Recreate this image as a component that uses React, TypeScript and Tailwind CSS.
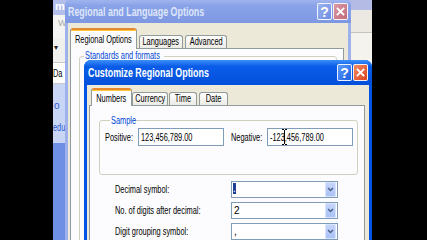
import React from "react"

// the capture is squeezed sideways, so text is drawn in Arial metrics and narrowed
function T({ children, center, className = "" }: { children: React.ReactNode; center?: boolean; className?: string }) {
  return (
    <span className={`inline-block whitespace-nowrap scale-x-[0.74] ${center ? "origin-center" : "origin-left"} ${className}`}>
      {children}
    </span>
  )
}

function TitleButton({ kind, active }: { kind: "help" | "close"; active: boolean }) {
  const bg =
    kind === "help"
      ? active
        ? "bg-linear-to-br from-[#5c9bff] to-[#1c5fe0]"
        : "bg-linear-to-br from-[#9ab2f0] to-[#6f8de2]"
      : active
        ? "bg-linear-to-br from-[#f08a62] to-[#d8421c]"
        : "bg-linear-to-br from-[#d99aa4] to-[#c06a78]"
  return (
    <div className={`w-[15px] h-[17px] rounded-[2px] border border-white/90 flex items-center justify-center ${bg}`}>
      {kind === "help" ? (
        <span className="text-white font-bold text-[14px] leading-none">?</span>
      ) : (
        <svg width="9" height="9" viewBox="0 0 9 9">
          <path d="M1.5 1.5l6 6M7.5 1.5l-6 6" stroke="white" strokeWidth="1.8" strokeLinecap="square" />
        </svg>
      )}
    </div>
  )
}

function Tab({ label, selected, w }: { label: string; selected?: boolean; w: string }) {
  return selected ? (
    <div className={`${w} relative z-10 -mb-px flex flex-col bg-[#fcfcfe] border-x border-[#919b9c] rounded-t-[3px] overflow-hidden`}>
      <div className="h-[3px] bg-[#e68b2c] border-b border-[#ffc73c]" />
      <div className="flex-1 flex items-center justify-center text-[10px] leading-none text-black">
        <T center>{label}</T>
      </div>
    </div>
  ) : (
    <div className={`${w} h-[13px] flex items-center justify-center border-x border-t border-[#919b9c] rounded-t-[3px] bg-linear-to-b from-[#fefefe] to-[#ecebe5] text-[10px] leading-none text-black`}>
      <T center>{label}</T>
    </div>
  )
}

function Combo({ value, highlight }: { value: string; highlight?: boolean }) {
  return (
    <div className="w-[107px] h-[17px] border border-[#7f9db9] bg-white flex items-center">
      <div className="flex-1 pl-[1px] text-[10px] leading-none text-black">
        {highlight ? <span className="inline-block bg-[#1f3f94] text-white w-[3px] h-[11px] leading-[11px] overflow-hidden">{value}</span> : <span className="pl-[1px]">{value}</span>}
      </div>
      <div className="w-[11px] h-[15px] mr-px bg-linear-to-b from-[#c6d6fb] to-[#a9c2f6] border border-[#d7e2fb] rounded-[1px] flex items-center justify-center">
        <svg width="7" height="5" viewBox="0 0 7 5">
          <path d="M1 1l2.5 2.5L6 1" stroke="#4d6185" strokeWidth="1.5" fill="none" />
        </svg>
      </div>
    </div>
  )
}

function Field({ value, cursor }: { value: string; cursor?: boolean }) {
  return (
    <div className="relative w-[86px] h-[18px] border border-[#7f9db9] bg-white flex items-center pl-[2px] text-[10px] text-black">
      <T>{value}</T>
      {cursor && (
        <svg className="absolute left-[14px] top-[0px]" width="5" height="16" viewBox="0 0 5 16">
          <path d="M0 0.5h2M3 0.5h2M2.5 1v14M0 15.5h2M3 15.5h2" stroke="#000" strokeWidth="1" fill="none" />
        </svg>
      )}
    </div>
  )
}

export default function App() {
  return (
    <div className="w-[427px] h-[240px] bg-black flex overflow-hidden font-['Liberation_Sans',Arial,sans-serif]">
      <div className="w-[53px] shrink-0" />
      <div className="relative w-[319px] h-[240px] overflow-hidden bg-[#6e8fe4]">
        {/* window far left, mostly hidden */}
        <div className="absolute left-0 top-0 w-[14px] h-[240px] flex flex-col overflow-hidden whitespace-nowrap">
          <div className="h-[15px] bg-[#b3bfeb] pl-[2px] text-white font-bold text-[11px] leading-[12px]">m</div>
          <div className="h-[23px] bg-[#f4f4f2] pl-[5px] pt-[4px] text-[#a8a8a8] text-[9px] leading-none">W</div>
          <div className="h-[24px] bg-[#f0f0ee] pl-[1px] pt-[6px] text-[#202020] text-[8px] leading-none">▾</div>
          <div className="h-[22px] bg-white border-y border-[#c8c8c8] flex items-center text-[10px] text-black">
            <T>Da</T>
          </div>
          <div className="h-[59px] bg-[#c9d5f5] flex flex-col text-[#2a5ad0] text-[10px] leading-none">
            <span className="mt-[17px] pl-[1px]">o</span>
            <span className="mt-[12px]">
              <T>edu</T>
            </span>
          </div>
          <div className="flex-1 bg-[#6e8fe4]" />
        </div>

        {/* window at right edge, behind */}
        <div className="absolute left-[296px] top-[-14px] w-[60px] h-[270px] flex flex-col">
          <div className="h-[24px] bg-[#b4bce6]" />
          <div className="h-[23px] bg-[#ebe9e2] border-b border-[#c8c6bc]" />
          <div className="flex-1 bg-[#f4f3ee]" />
        </div>

        {/* Regional and Language Options */}
        <div className="absolute left-[12px] top-[-2px] w-[286px] h-[250px] flex flex-col rounded-t-[7px] bg-[#9db1ec] overflow-hidden">
          <div className="h-[25px] shrink-0 flex items-center pl-[3px] pr-[3px] bg-linear-to-b from-[#a9bcf0] via-[#8aa3e8] via-30% to-[#7d98e2]">
            <div className="flex-1 pt-[3px] text-[#dfe6f9] font-bold text-[12px] leading-none">
              <T>Regional and Language Options</T>
            </div>
            <div className="flex gap-[1px] pt-[2px]">
              <TitleButton kind="help" active={false} />
              <TitleButton kind="close" active={false} />
            </div>
          </div>
          <div className="flex-1 mx-[3px] bg-[#ece9d8] flex flex-col pt-[5px]">
            <div className="flex items-end pl-[2px] gap-[2px]">
              <div className="w-[67px] h-[20px] flex">
                <Tab label="Regional Options" selected w="w-[67px]" />
              </div>
              <Tab label="Languages" w="w-[44px]" />
              <Tab label="Advanced" w="w-[42px]" />
            </div>
            <div className="flex-1 ml-[2px] mr-[4px] border border-[#919b9c] bg-[#fcfcfe] flex flex-col">
              <fieldset className="mt-[2px] ml-[8px] mr-[6px] h-[200px] border border-[#d0d0bf] rounded-[3px]">
                <legend className="ml-[4px] px-[1px] w-[80px] text-[10px] leading-[10px] text-[#0046d5]">
                  <T>Standards and formats</T>
                </legend>
              </fieldset>
            </div>
          </div>
        </div>

        {/* Customize Regional Options */}
        <div className="absolute left-[31px] top-[60px] w-[288px] h-[190px] flex flex-col rounded-t-[7px] bg-[#0054e3] overflow-hidden">
          <div className="h-[25px] shrink-0 flex items-center pl-[4px] pr-[4px] bg-linear-to-b from-[#3d8ff8] via-[#0a5ce8] via-25% to-[#0450da]">
            <div className="flex-1 text-white font-bold text-[12px] leading-none">
              <T>Customize Regional Options</T>
            </div>
            <div className="flex gap-[1px]">
              <TitleButton kind="help" active />
              <TitleButton kind="close" active />
            </div>
          </div>
          <div className="flex-1 mx-[3px] bg-[#ece9d8] flex flex-col pt-[3px]">
            <div className="flex items-end pl-[4px]">
              <div className="w-[41px] h-[17px] flex">
                <Tab label="Numbers" selected w="w-[41px]" />
              </div>
              <Tab label="Currency" w="w-[36px]" />
              <div className="ml-[1px]">
                <Tab label="Time" w="w-[28px]" />
              </div>
              <div className="ml-[2px]">
                <Tab label="Date" w="w-[29px]" />
              </div>
            </div>
            <div className="flex-1 ml-[2px] mr-[4px] border border-[#919b9c] bg-[#fcfcfe] flex flex-col">
              <fieldset className="mt-[9px] ml-[9px] mr-[6px] border border-[#d0d0bf] rounded-[3px] pl-[5px] pr-[4px] pt-[2px] pb-[28px]">
                <legend className="ml-[5px] px-[1px] w-[20px] text-[10px] leading-[11px] text-[#0046d5]">
                  <T>Sample</T>
                </legend>
                <div className="flex items-center text-[10px] text-black">
                  <span className="w-[33px]">
                    <T>Positive:</T>
                  </span>
                  <Field value="123,456,789.00" />
                  <span className="ml-[7px] w-[36px]">
                    <T>Negative:</T>
                  </span>
                  <Field value="-123,456,789.00" cursor />
                </div>
              </fieldset>
              <div className="mt-[6px] pl-[25px] flex flex-col gap-[4px] text-[10px] text-black">
                <div className="flex items-center">
                  <span className="w-[116px]">
                    <T>Decimal symbol:</T>
                  </span>
                  <Combo value="." highlight />
                </div>
                <div className="flex items-center">
                  <span className="w-[116px]">
                    <T>No. of digits after decimal:</T>
                  </span>
                  <Combo value="2" />
                </div>
                <div className="flex items-center">
                  <span className="w-[116px]">
                    <T>Digit grouping symbol:</T>
                  </span>
                  <Combo value="," />
                </div>
              </div>
            </div>
          </div>
        </div>
      </div>
      <div className="flex-1" />
    </div>
  )
}
